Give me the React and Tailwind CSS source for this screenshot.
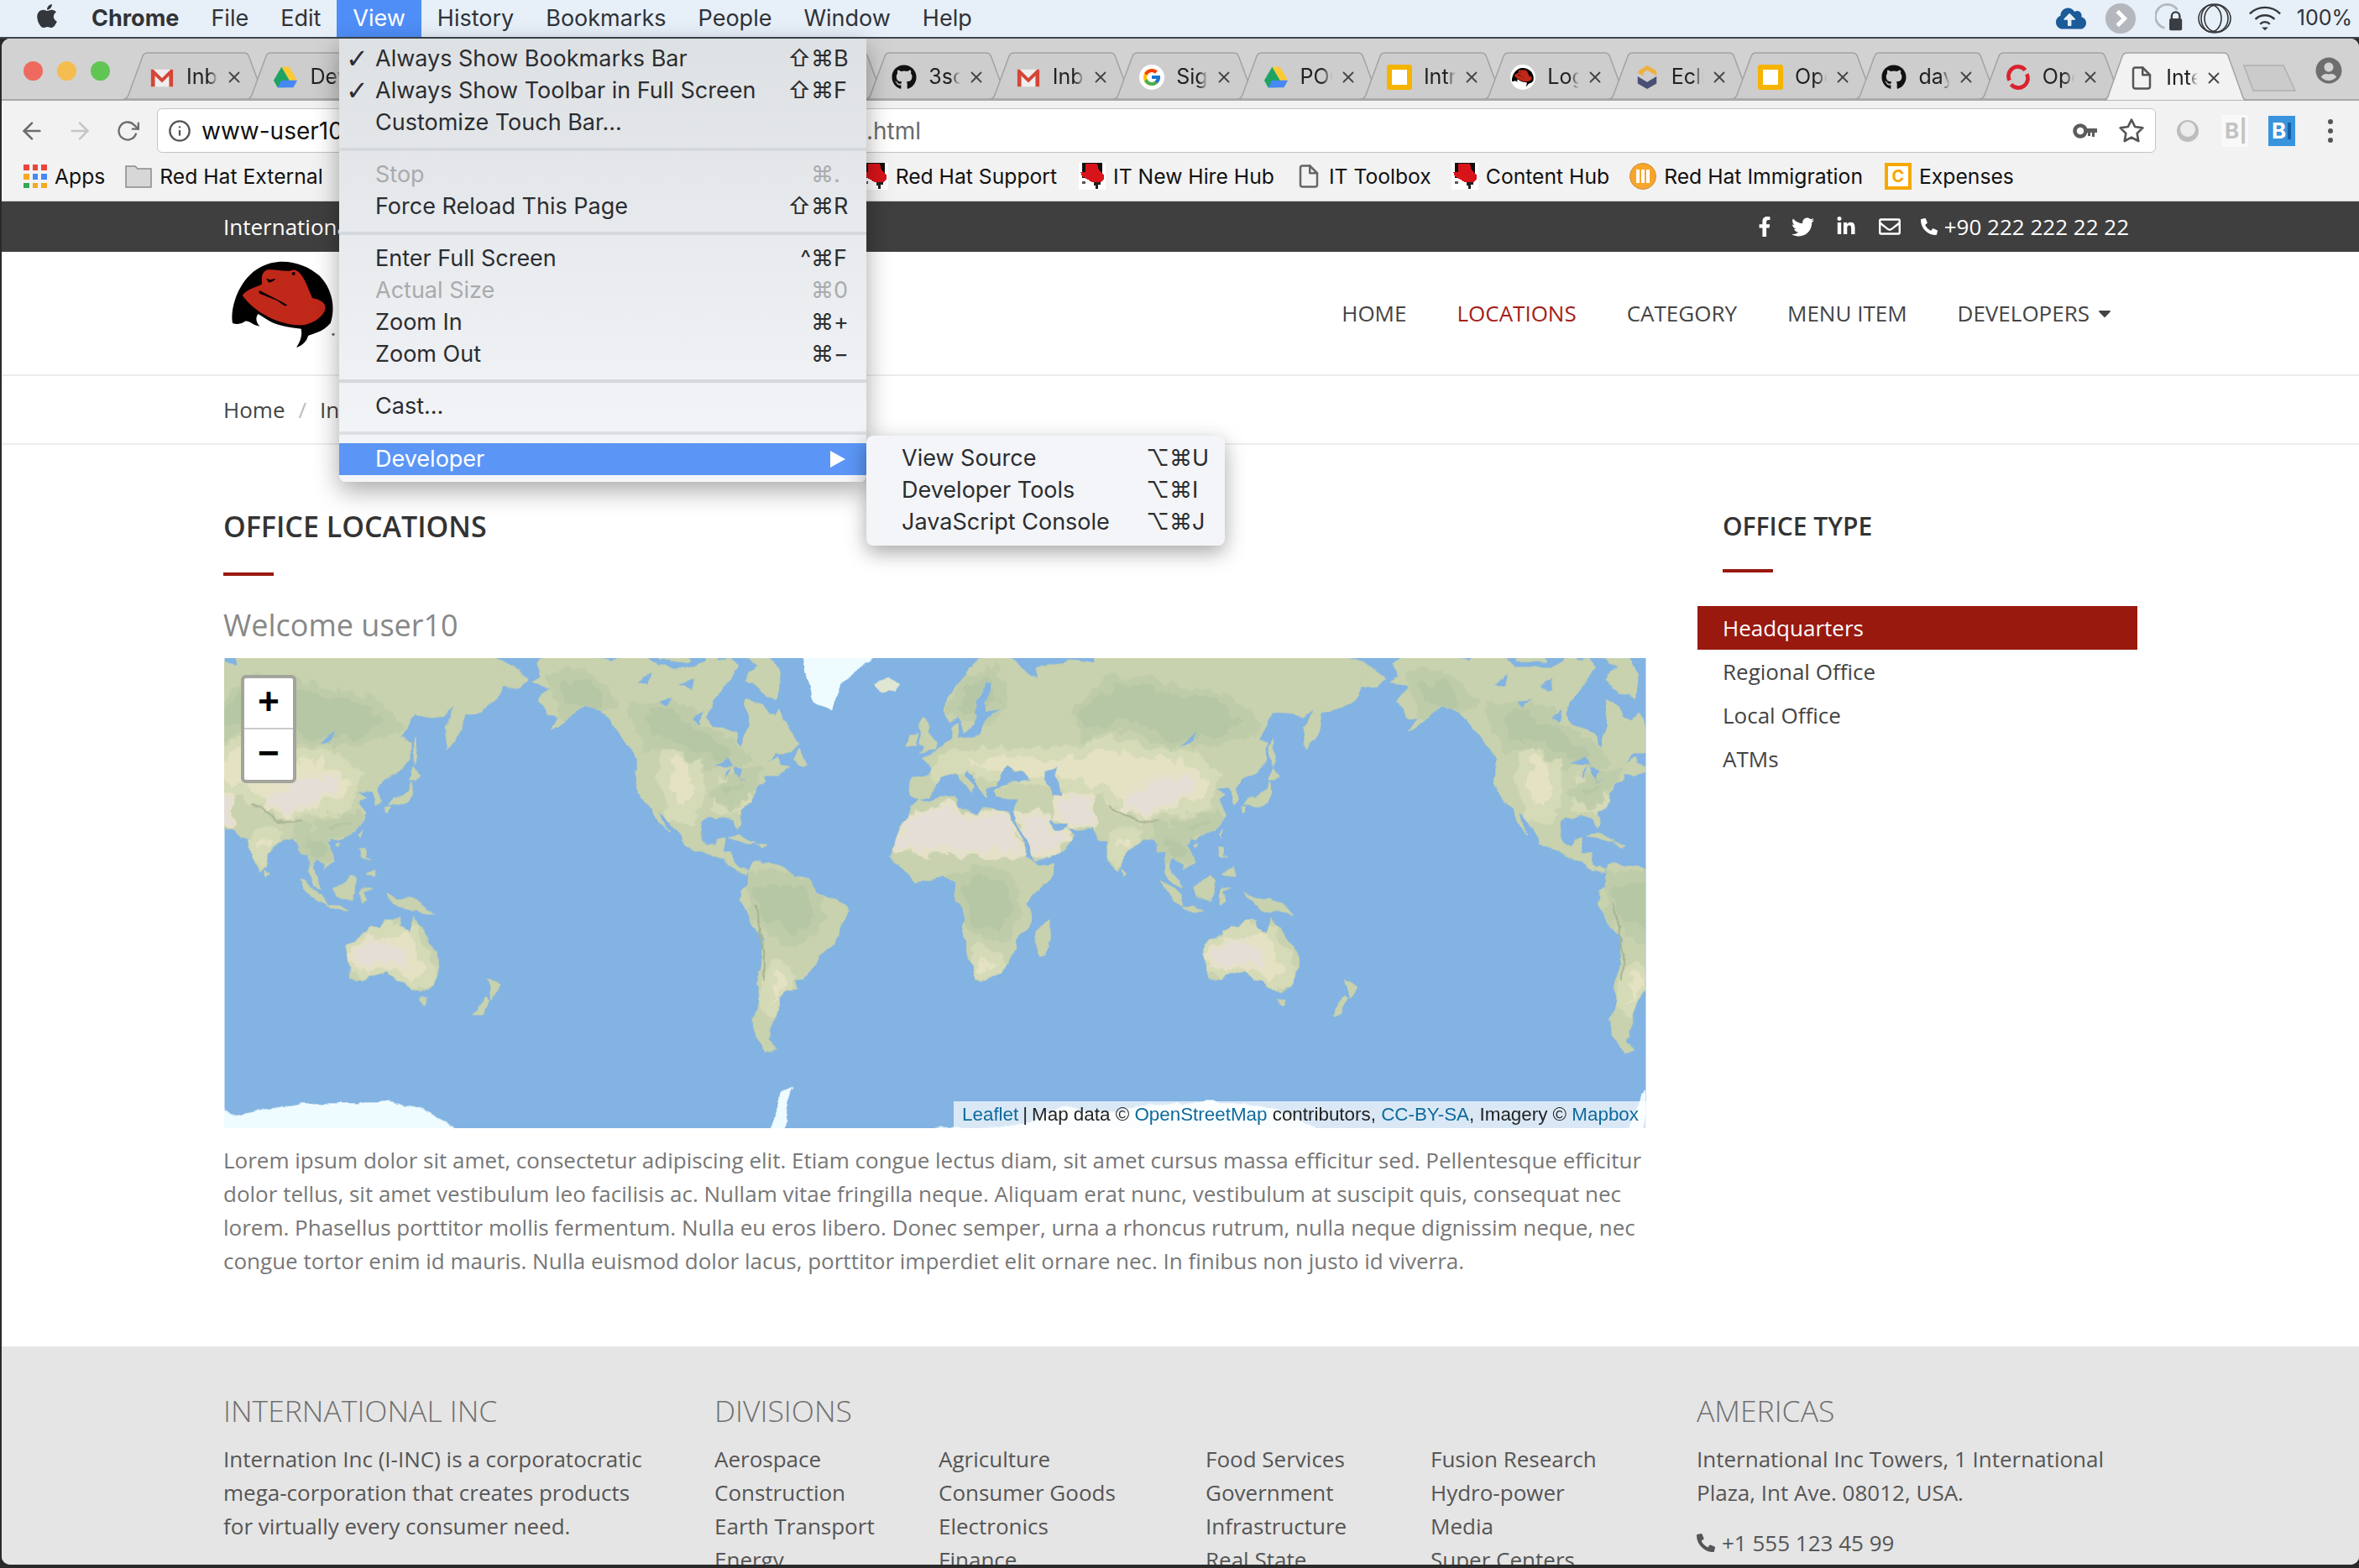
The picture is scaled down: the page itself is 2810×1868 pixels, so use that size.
import { FaApple, FaCloudUploadAlt, FaFacebookF, FaTwitter, FaLinkedinIn, FaRegEnvelope, FaPhoneAlt, FaGithub, FaCaretDown, FaUserCircle } from "react-icons/fa"
import { FcGoogle } from "react-icons/fc"
import { FiArrowLeft, FiArrowRight, FiRotateCw, FiInfo, FiStar, FiFile, FiX } from "react-icons/fi"

// --- map data: rough coastlines as [lon, lat], projected to web mercator below ---
const LAND = [
  // north america
  [[-168,65.6],[-164,66.5],[-166,68.5],[-162,70],[-156,71.3],[-148,70.5],[-141,69.7],[-135,69],[-128,70],[-120,69.5],[-115,68],[-108,68],[-100,68],[-95,69],[-94,72],[-90,69],[-85,69.5],[-82,68],[-87,65],[-93,62],[-94.5,59],[-92,57],[-87,56],[-82,55],[-82,52.5],[-79.5,51.5],[-79,55],[-77,57],[-78,60],[-78,62.5],[-72,61.5],[-70,59],[-66,58.5],[-64,60],[-61,56],[-56,52.5],[-60,50],[-66,50],[-70,47],[-65,49],[-64.5,47],[-61,46],[-65,43.5],[-70,43.5],[-70,41.5],[-74,40.5],[-75.5,38],[-76,35],[-81,31.5],[-80,27],[-80.5,25.2],[-82,27],[-83,29],[-85,29.7],[-89,30],[-91,29],[-94,29.5],[-97,28],[-97.7,24],[-97.5,21],[-95,18.5],[-91.5,18.5],[-90.5,21],[-87,21.5],[-88,16],[-84,15.8],[-83.5,11],[-81,9],[-79.5,9.5],[-77.3,8.5],[-78,7.5],[-80,7.5],[-83,8.3],[-85.5,10],[-87.5,13],[-92,14.5],[-95,16],[-100,17],[-105,19.5],[-105.5,22],[-109,26],[-112.5,30],[-114.5,31.5],[-112,26],[-110,23],[-112,25],[-115,28],[-117,32.5],[-120.5,34.5],[-122.5,37.5],[-124.3,40.5],[-124,46],[-123,49],[-128,51.5],[-131,55],[-135,58],[-140,60],[-146,61],[-151,60],[-154,58],[-160,55.5],[-157,58.5],[-162,59],[-165,62],[-161,64.5]],
  [[-80,73],[-72,71.5],[-64,67],[-65,62.5],[-72,64],[-78,66],[-73,68],[-80,70]],
  [[-117,73],[-105,73],[-102,69],[-115,69]],
  [[-59,48],[-56,51.5],[-53,47],[-56,47]],
  [[-85,22],[-80,23],[-74,20.2],[-78,20]],
  [[-74,19.8],[-69,19],[-71,18]],
  // south america
  [[-77,8.5],[-75,11],[-72,12],[-71,11],[-68,11.5],[-64,10.5],[-60,8.5],[-57,6],[-52,4.5],[-50,1],[-48,-1],[-44,-2.5],[-40,-3],[-37,-5],[-35,-7.5],[-37,-11],[-39,-15],[-39.5,-19],[-41,-22],[-45,-23.5],[-48.5,-26],[-49,-29],[-52,-33],[-55,-35],[-58,-34.5],[-57,-38],[-62,-39],[-65,-41],[-65,-45],[-68,-50],[-68.5,-53],[-65,-55],[-70,-55.5],[-74,-52],[-75.5,-47],[-73,-42],[-73.5,-37],[-71.5,-30],[-70,-20],[-71,-17.5],[-76,-14],[-79,-8],[-81,-5],[-80,-2.5],[-80.5,0],[-78.5,2],[-77.5,4],[-77.3,7]],
  // africa
  [[-6,35.8],[-2,35.2],[3,36.8],[10,37.2],[10.5,34],[15,32.5],[19,30.5],[20.5,32.7],[25,31.7],[30,31],[32.5,31],[32.5,29.8],[34,27],[37,21.5],[37.5,18.5],[39,15.5],[43,12],[44,10.5],[51,11.8],[50,8],[46,2.5],[41,-2],[39,-6],[40.5,-11],[40.5,-15],[35,-20],[35.5,-24],[32.5,-26],[32,-29],[28,-33],[25,-34],[20,-34.8],[18.3,-34],[15,-27],[14.3,-22],[12,-17],[13.5,-11],[12,-5],[9,-1],[9.5,3.5],[7,4.5],[4,6.3],[-2,5],[-4,5.2],[-8,4.5],[-13,8.5],[-15,11],[-17,14.7],[-16,20],[-13,27.5],[-10,30],[-9,33]],
  // eurasia
  [[-9,37],[-9.5,39],[-9,43],[-2,43.5],[-1,46],[-4.5,48.5],[2,51],[4,52],[8,54],[8,57],[10.5,57.5],[11,54],[14,54],[19,54.5],[21,57],[24,58.5],[29,60],[23,60],[21.5,62],[25,65.5],[22,65.5],[18,62.5],[17,60],[18,59],[16,56],[13,55.5],[11,59],[7,58],[5,60],[5.5,62],[12,66],[15,68],[20,70],[25,71],[31,70],[41,67],[44,66],[44,68],[54,68.5],[60,69],[68,68.5],[67,72],[73,72],[80,73],[90,75],[105,77.5],[113,74],[130,71],[140,72.5],[160,70],[170,70],[180,69],[180,65],[177,62.5],[170,60],[163,59.5],[162,56],[157,51],[155.5,57],[160,61],[155,59],[143,59.5],[137,54],[141,53],[140,48],[135,44],[130,42.5],[127.5,39.5],[129.5,36],[126.5,34.5],[126,37],[125,39.5],[121,39],[118,39],[122,37],[119,35],[122,31],[121,28],[118,24.5],[114,22.3],[110,21],[108,21.5],[106,19],[109,14],[109,11.5],[105,8.8],[105,10],[100.5,13.5],[99.5,10],[103,4],[104,1.4],[101,3],[98.5,8],[98,15],[94.5,16],[94,19],[91.5,22.5],[88,21.7],[86,20],[80.5,15.5],[80,10.5],[77.5,8],[75,12],[73,19],[72.5,21],[70,21],[68.5,23.5],[66.5,25.3],[61,25],[57,25.5],[56.5,27],[51,28],[48.5,30],[48,29],[50,26.5],[51.5,24.5],[54,24],[56.5,26],[59.5,22.5],[55,17],[45,13],[43,12.8],[39,21],[35,28],[34.5,31.5],[36,36],[32,36],[28,36.7],[26.5,39.5],[29,41],[35,42],[41.5,41.5],[39,44],[37,45],[33.5,44.5],[30.5,46],[28,43],[26,40.7],[23,40.5],[23,37],[20,39.5],[19,42],[14,45],[12.5,44],[18,40],[16,38],[12.5,41.5],[9,44.5],[3.5,43.2],[0,39.5],[-2,36.8],[-5.5,36]],
  [[-180,69],[-170,66],[-173,64.5],[-180,65]],
  // islands
  [[-5.5,50],[1,51.2],[1.5,52.8],[-1.5,55],[-2,57.5],[-4,58.6],[-6,57],[-4.5,54.5],[-5,52],[-3,51.4]],
  [[-10,52],[-6,52.2],[-6,55],[-8.5,55]],
  [[49.5,-12],[50.5,-16],[47.5,-25],[45,-25.5],[43.5,-22],[44.5,-16.5]],
  [[80,9.5],[82,7.5],[80.5,6]],
  [[131,34],[136,33.5],[140,35],[141.5,38],[141,41.5],[139.7,39],[136.5,37],[133,35.5]],
  [[140,42],[143,42],[145.5,43.5],[142,45.5]],
  [[130,33.5],[132,33],[131,31],[130,31.5]],
  [[142,46],[143.5,49],[143,54],[142,52]],
  [[120,23],[121.5,25],[121,22]],
  [[109,19],[111,20],[110,18.3]],
  [[120,18],[122,18],[122,14],[124,13],[120.5,14]],
  [[122,7],[126,9.5],[126,6.5]],
  [[95,5.5],[98,4],[104,-2],[106,-6],[102,-4.5],[98,0]],
  [[105.5,-6.5],[111,-6.5],[114.5,-7.8],[108,-7.8]],
  [[109,1],[113,3],[117,7],[119,5],[118,1],[116.5,-3.5],[111,-3]],
  [[119.5,-1],[120.5,1],[125,1.3],[121,0],[122.5,-4.5],[120.3,-5.5]],
  [[131,-1],[135,-3],[141,-2.7],[146,-5.5],[150.5,-10.5],[144,-7.8],[141,-9],[138,-8],[133,-4]],
  [[114,-22],[122,-18],[125,-14.5],[129,-15],[131,-12],[136,-12],[135.5,-15],[140,-17.5],[142,-11],[145.5,-15],[149,-21],[153,-25.5],[153,-30],[150,-37],[146,-39],[141,-38],[138,-35],[135,-34.5],[131,-31.5],[124,-33],[118,-35],[115,-34],[115,-30],[113.5,-25]],
  [[145,-41],[148,-41],[147,-43.5],[146,-43.5]],
  [[172.7,-34.5],[178.5,-37.5],[175,-41.5],[174.5,-38.5]],
  [[172.5,-40.7],[174,-41.7],[170.5,-46],[167,-46],[170,-43]],
]
const ICE = [
  [[-73,78.5],[-60,82],[-30,83.5],[-18,80],[-22,72],[-26,69],[-38,65.5],[-43,60],[-50,62],[-53,67],[-55,72],[-68,76]],
  [[-180,-78],[-160,-78],[-150,-76],[-130,-74],[-110,-73],[-100,-73],[-85,-73],[-75,-72],[-68,-70],[-63,-64.5],[-58,-63.5],[-60,-66],[-62,-70],[-60,-74],[-45,-78],[-30,-77],[-20,-73],[0,-70],[20,-70],[40,-69],[55,-66.5],[70,-68],[80,-67],[95,-66],[110,-66],[130,-66],[145,-67],[160,-70],[170,-71.5],[180,-78],[180,-85],[-180,-85]],
]
const ICELAND = [[-24,65.5],[-19,66.2],[-14,65.5],[-16,64],[-21,63.5]]
const DESERT = [
  [[-13,27],[-7,31],[5,33],[10,33],[15,31],[25,30],[30,30],[33,28],[36,21],[37,16],[32,16],[20,16],[5,17],[-5,16],[-16,17],[-16,21]],
  [[36,30],[44,32],[48,30],[51,25],[56,24],[58,21],[52,17],[45,15],[42,17],[38,24]],
  [[50,36],[60,38],[66,37],[68,28],[60,26],[52,29]],
  [[80,36],[90,43],[104,43],[112,45],[108,37],[100,34],[90,31],[81,31]],
  [[116,-25],[122,-20],[130,-19],[135,-22],[139,-24],[138,-31],[130,-29.5],[123,-31],[117,-30]],
]
const PALE = [
  [[0,45],[10,49],[30,50],[50,50],[75,52],[90,50],[110,48],[118,43],[116,36],[110,33],[100,33],[88,30],[80,33],[70,38],[60,40],[48,42],[38,42],[25,44],[12,46],[2,44]],
  [[-112,50],[-105,50],[-98,46],[-98,38],[-102,30],[-108,30],[-113,40]],
  [[-88,41],[-78,41],[-81,33],[-90,33]],
  [[114,-23],[122,-18.5],[130,-15.5],[136,-15],[143,-18],[147,-25],[150,-35],[141,-37],[135,-33.5],[120,-33.5],[115,-30]],
  [[74,20],[80,24],[86,24],[84,20],[78,13],[75,15]],
  [[-65,-30],[-58,-34],[-62,-39],[-66,-45],[-70,-45],[-69,-33]],
  [[18,-25],[26,-27],[30,-31],[22,-33],[18,-31]],
]
const FOREST = [
  [[-78,2],[-72,6],[-60,6],[-52,2],[-48,-3],[-46,-10],[-52,-17],[-60,-20],[-66,-17],[-75,-10]],
  [[9,3],[18,8],[30,6],[35,0],[35,-10],[30,-17],[18,-17],[13,-8],[10,-2]],
  [[60,60],[75,66],[100,65],[125,62],[135,56],[118,53],[100,53],[80,57],[65,55]],
  [[-125,60],[-110,62],[-100,58],[-85,52],[-78,48],[-92,47],[-105,51],[-120,53]],
  [[-160,66],[-145,67],[-135,62],[-140,60],[-155,60]],
  [[8,60],[15,66],[25,68],[29,62],[22,58]],
  [[95,25],[105,22],[108,14],[100,12],[96,17]],
  [[103,27],[118,30],[118,25],[108,22]],
  [[-85,34],[-78,41],[-74,43],[-82,44],[-90,38]],
]
const LAKES = [
  [[47,45],[53,46.5],[51,44],[53,40],[54,37],[50,37.5],[49,40],[47,43]],
  [[-92,46.8],[-86,48.5],[-84.5,46.5],[-88,46.5]],
  [[-87.5,41.7],[-85.5,45.5],[-87,45]],
  [[-84,46],[-80,45],[-81.5,43],[-83.5,44]],
  [[-83,42],[-79,43],[-76,44],[-78,43.3],[-80,42.5]],
  [[-124,65],[-118,67],[-119,65]],
  [[-115,62],[-109,62.8],[-112,61]],
  [[-100,58],[-96,60],[-97,57]],
  [[-106,65],[-100,66],[-101,64]],
  [[104,52],[110,55.5],[109,53]],
]
const RIDGES = [
  [[74,34],[80,31],[86,27.8],[95,28]],
  [[-75,-5],[-72,-15],[-70,-25],[-70.5,-35]],
]

function project([lon, lat]) {
  const x = ((lon + 180) / 360) * 1024
  const y = ((1 - Math.log(Math.tan(Math.PI / 4 + (lat * Math.PI) / 360)) / Math.PI) / 2) * 1024
  return `${x.toFixed(1)} ${y.toFixed(1)}`
}
const toPath = (pts, closed = true) => "M" + pts.map(project).join("L") + (closed ? "Z" : "")
const group = (list) => list.map((p) => toPath(p)).join("")

function WorldMap() {
  return (
    <svg viewBox="0 0 1696 561" className="block h-full w-full blur-[0.6px]">
      <defs>
        {/* turbulence breaks up the straight polygon edges into something coast-like */}
        <filter id="coast" x="0" y="0" width="100%" height="100%" filterUnits="userSpaceOnUse" primitiveUnits="userSpaceOnUse">
          <feTurbulence type="fractalNoise" baseFrequency="0.035" numOctaves="4" seed="3" />
          <feDisplacementMap in="SourceGraphic" scale="11" xChannelSelector="R" yChannelSelector="G" />
        </filter>
        <filter id="relief" x="-2%" y="-2%" width="104%" height="104%">
          <feTurbulence type="fractalNoise" baseFrequency="0.05" numOctaves="4" seed="8" />
          <feDisplacementMap in="SourceGraphic" scale="24" xChannelSelector="G" yChannelSelector="R" />
        </filter>
        <clipPath id="land-clip">
          <path d={group(LAND)} />
        </clipPath>
        <g id="world" strokeLinejoin="round">
          <path d={group(LAND)} fill="#c8d2ae" stroke="#c8d2ae" strokeWidth="1" />
          <g clipPath="url(#land-clip)">
            <g filter="url(#relief)">
              <path d={group(PALE)} fill="#e4e2c2" stroke="#d5dab7" strokeWidth="14" />
              <path d={group(FOREST)} fill="#b6c7a5" stroke="#bfccaa" strokeWidth="12" />
              <path d={group(DESERT)} fill="#e4ded7" stroke="#e5e1c9" strokeWidth="7" />
            </g>
          </g>
          <path d={group(ICE)} fill="#effcff" />
          <path d={toPath(ICELAND)} fill="#dfe6d2" />
          <path d={group(LAKES)} fill="#82b3e2" />
          {RIDGES.map((r, i) => (
            <path key={i} d={toPath(r, false)} fill="none" stroke="#a7b493" strokeWidth="2" />
          ))}
        </g>
      </defs>
      <rect width="1696" height="561" fill="#82b3e2" />
      <g filter="url(#coast)">
        <use href="#world" x="-691" y="-234" />
        <use href="#world" x="333" y="-234" />
        <use href="#world" x="1357" y="-234" />
      </g>
    </svg>
  )
}

// --- small drawings ---
function ShadowMan({ className }) {
  return (
    <svg viewBox="0 0 420 375" className={className}>
      <path d="M30 255C20 190 60 90 130 55C200 15 290 40 340 85C385 130 400 200 380 255C350 290 320 290 300 300C295 320 280 335 258 342C272 320 280 300 275 275C230 270 180 262 150 240L122 222C110 235 115 255 128 266C100 262 90 245 75 248C60 258 45 260 30 255Z" fill="#000" />
      <path d="M65 155C85 130 125 125 135 115C135 95 130 80 150 65C185 60 215 75 245 65C265 60 285 90 300 130L315 165C340 170 362 180 362 200C360 230 310 265 265 262C200 260 110 220 65 155Z" fill="#c0281a" />
      <path d="M125 138C150 150 190 170 225 190C220 200 205 185 190 175C165 165 140 155 125 148Z" fill="#000" />
      <path d="M150 95L165 100L185 95L175 105L160 110Z" fill="#000" />
      <circle cx="248" cy="78" r="6" fill="#000" />
      <circle cx="390" cy="295" r="5" fill="#666" />
    </svg>
  )
}

// the low-res favicon version: mostly red, black top corner, white bottom
function RedHatFav() {
  return (
    <svg viewBox="0 0 32 32" className="size-[32px]" shapeRendering="crispEdges">
      <rect width="32" height="32" fill="#fff" />
      <path d="M4 0h24v22H4z" fill="#111" />
      <path d="M0 18h32v14H0z" fill="#fff" />
      <path d="M8 1h14l2 8 6 5v6l-4 3H16L4 16l-2-5h6z" fill="#d8141a" />
      <path d="M18 23h8v3h-3v5h-3v-4h-2z" fill="#222" />
      <path d="M4 22h4v3H4z" fill="#555" />
    </svg>
  )
}

function Gmail() {
  return (
    <svg viewBox="0 0 32 32" className="size-[30px]">
      <path d="M2 6h28v22H2z" fill="#eee" />
      <path d="M2 28V6h3l11 11L27 6h3v22h-5V14l-9 9-9-9v14z" fill="#d44638" />
    </svg>
  )
}

function Drive() {
  return (
    <svg viewBox="0 0 32 32" className="size-[30px]">
      <path d="M11 3h10l10 17H21z" fill="#fcc934" />
      <path d="M11 3l10 17-5 9H6l-5-9z" fill="#1ea362" />
      <path d="M11 20h20l-5 9H6z" fill="#4688f4" />
    </svg>
  )
}

function Slides() {
  return (
    <span className="flex size-[30px] items-center justify-center rounded-[3px] bg-[#f5b400]">
      <span className="size-[18px] bg-white" />
    </span>
  )
}

function Che() {
  return (
    <svg viewBox="0 0 32 32" className="size-[30px]">
      <path d="M16 1l12 7v6l-12-7-5 3v4l-6-3V8z" fill="#f0b03a" />
      <path d="M4 15l12 7 12-7v9l-12 7-12-7z" fill="#4a4f75" />
    </svg>
  )
}

function OpenShiftFav() {
  return (
    <svg viewBox="0 0 32 32" className="size-[30px]" fill="none" stroke="#d9232e" strokeWidth="5">
      <path d="M5 20A12 12 0 0 1 25 7" />
      <path d="M27 12A12 12 0 0 1 7 25" />
    </svg>
  )
}

const TABS = [
  { icon: <Gmail />, title: "Inbox" },
  { icon: <Drive />, title: "Dev" },
  // these four sit behind the open menu
  { icon: <Drive /> },
  { icon: <Drive /> },
  { icon: <Drive /> },
  { icon: <Drive /> },
  { icon: <FaGithub className="size-[30px] text-[#111]" />, title: "3scale" },
  { icon: <Gmail />, title: "Inbox" },
  { icon: <span className="flex size-[30px] items-center justify-center rounded-full bg-white"><FcGoogle className="size-[24px]" /></span>, title: "Sign" },
  { icon: <Drive />, title: "POC" },
  { icon: <Slides />, title: "Intro" },
  { icon: <ShadowMan className="size-[30px] rounded-full bg-white" />, title: "Log" },
  { icon: <Che />, title: "Eclipse" },
  { icon: <Slides />, title: "Open" },
  { icon: <FaGithub className="size-[30px] text-[#111]" />, title: "day" },
  { icon: <OpenShiftFav />, title: "Open" },
  { icon: <FiFile className="size-[30px] text-[#555]" />, title: "International", active: true },
]

function Tab({ icon, title, active, first }) {
  return (
    <div className={`relative h-[56px] w-[172.4px] shrink-0 ${first ? "" : "-ml-[25px]"} ${active ? "z-10 -mb-[2px] h-[58px]" : ""}`}>
      <svg viewBox="0 0 172 58" className="absolute inset-0 h-full w-full" preserveAspectRatio="none">
        <path d="M0 58C4 58 6 54 7 50L23 5C24 2 26 1 29 1H143C146 1 148 2 149 5L165 50C166 54 168 58 172 58Z" fill={active ? "#f2f2f2" : "#cdcdcd"} stroke="#a3a3a3" strokeWidth="1.5" />
      </svg>
      <div className="relative flex h-full items-center pl-[31px] pt-[4px]">
        <span className="flex size-[30px] shrink-0 items-center justify-center">{icon}</span>
        <span className="ml-[14px] w-[38px] overflow-hidden whitespace-nowrap text-[25px] text-[#222] [mask-image:linear-gradient(to_right,black_70%,transparent)]">{title}</span>
        <FiX className="ml-[8px] size-[22px] shrink-0 text-[#444]" />
      </div>
    </div>
  )
}

function Bookmark({ icon, label, className = "" }) {
  return (
    <div className={`flex items-center gap-[9px] ${className}`}>
      {icon}
      <span className="whitespace-nowrap text-[24.7px] text-[#111]">{label}</span>
    </div>
  )
}

function AppsGrid() {
  const colors = ["#e8453c", "#e8453c", "#e8453c", "#f4a91f", "#4688f4", "#4688f4", "#34a853", "#f4a91f", "#f4a91f"]
  return (
    <div className="grid size-[28px] grid-cols-3 gap-[4px]">
      {colors.map((c, i) => (
        <span key={i} style={{ backgroundColor: c }} />
      ))}
    </div>
  )
}

function MenuRow({ check, label, mods, keyName, disabled, arrow, highlighted, pad = "pl-[43px]" }) {
  const color = highlighted ? "text-white" : disabled ? "text-[#a9abad]" : "text-[#2b2d30]"
  return (
    <div className={`relative flex h-[38px] items-center pr-[19px] text-[27px] ${pad} ${color} ${highlighted ? "bg-[#5b96f6]" : ""}`}>
      {check && <span className="absolute left-[8px] font-['DejaVu_Sans',sans-serif] text-[32px] font-bold">✓</span>}
      <span className="whitespace-nowrap">{label}</span>
      {mods !== undefined && (
        <span className="ml-auto flex font-['Inter','DejaVu_Sans',sans-serif]">
          <span className="text-right">{mods}</span>
          <span className="w-[20px] text-left">{keyName}</span>
        </span>
      )}
      {arrow && (
        <svg viewBox="0 0 20 20" className="ml-auto mr-[5px] size-[20px]">
          <path d="M1 0l18 10L1 20z" fill="#fff" />
        </svg>
      )}
    </div>
  )
}

const MenuSep = () => <div className="mb-[9px] mt-[11px] h-[4px] bg-[#d5d8dc]" />

function ViewMenu() {
  return (
    <div className="absolute left-[404px] top-[46px] z-30 h-[528px] w-[628px] rounded-b-[8px] bg-gradient-to-b from-[#dee1e4] to-[#f4f6f9] pt-[5px] font-['Inter','DejaVu_Sans',sans-serif] shadow-[0_10px_30px_rgba(0,0,0,0.35)]">
      <MenuRow check label="Always Show Bookmarks Bar" mods="⇧⌘" keyName="B" />
      <MenuRow check label="Always Show Toolbar in Full Screen" mods="⇧⌘" keyName="F" />
      <MenuRow label="Customize Touch Bar..." />
      <MenuSep />
      <MenuRow disabled label="Stop" mods="⌘" keyName="." />
      <MenuRow label="Force Reload This Page" mods="⇧⌘" keyName="R" />
      <MenuSep />
      <MenuRow label="Enter Full Screen" mods="^⌘" keyName="F" />
      <MenuRow disabled label="Actual Size" mods="⌘" keyName="0" />
      <MenuRow label="Zoom In" mods="⌘" keyName="+" />
      <MenuRow label="Zoom Out" mods="⌘" keyName="−" />
      <MenuSep />
      <MenuRow label="Cast..." />
      <div className="mb-[10px] mt-[11px] h-[4px] bg-[#dde0e3]" />
      <MenuRow highlighted arrow label="Developer" />
    </div>
  )
}

function DeveloperMenu() {
  return (
    <div className="absolute left-[1032px] top-[519px] z-30 h-[131px] w-[427px] rounded-[8px] bg-[#f3f5f8] pt-[8px] font-['Inter','DejaVu_Sans',sans-serif] shadow-[0_8px_24px_rgba(0,0,0,0.35)]">
      <MenuRow pad="pl-[42px]" label="View Source" mods="⌥⌘" keyName="U" />
      <MenuRow pad="pl-[42px]" label="Developer Tools" mods="⌥⌘" keyName="I" />
      <MenuRow pad="pl-[42px]" label="JavaScript Console" mods="⌥⌘" keyName="J" />
    </div>
  )
}

function MenuBar() {
  const items = ["File", "Edit", "View", "History", "Bookmarks", "People", "Window", "Help"]
  return (
    <div className="flex h-[46px] shrink-0 items-stretch border-b-2 border-[#3c4650] bg-[#e7eff8] font-['Inter',sans-serif] text-[27px] text-[#2f3338]">
      <FaApple className="ml-[40px] mt-[3px] size-[32px] text-[#33363a]" />
      <div className="ml-[18px] flex items-center px-[19px] font-bold">Chrome</div>
      {items.map((m) => (
        <div key={m} className={`flex items-center px-[19px] ${m === "View" ? "bg-[#4f8ef7] text-white" : ""}`}>{m}</div>
      ))}
      <div className="ml-auto flex items-center pr-[8px]">
        <FaCloudUploadAlt className="size-[36px] text-[#1a5b98]" />
        <svg viewBox="0 0 40 40" className="ml-[22px] size-[38px]">
          <circle cx="20" cy="20" r="19" fill="#b4b8be" />
          <path d="M16 11l9 9-9 9" fill="none" stroke="#fff" strokeWidth="5" />
        </svg>
        <svg viewBox="0 0 38 36" className="ml-[22px] size-[36px]">
          <path d="M28 7A15 15 0 1 0 12 30" fill="none" stroke="#b4b8be" strokeWidth="3" />
          <rect x="18" y="18" width="16" height="15" rx="2" fill="#3a3d44" />
          <path d="M21 18v-3a5 5 0 0 1 10 0v3" fill="none" stroke="#3a3d44" strokeWidth="2.5" />
        </svg>
        <svg viewBox="0 0 40 36" className="ml-[15px] h-[36px] w-[40px]" fill="none" stroke="#33363a" strokeWidth="1.6">
          <ellipse cx="20" cy="18" rx="19" ry="17" />
          <ellipse cx="16" cy="18" rx="12" ry="16" />
          <ellipse cx="22" cy="18" rx="14" ry="16" />
        </svg>
        <svg viewBox="0 0 42 32" className="ml-[20px] h-[32px] w-[40px]" fill="none" stroke="#33363a" strokeWidth="2.5">
          <path d="M2 10a27 27 0 0 1 38 0" />
          <path d="M9 17a17 17 0 0 1 24 0" />
          <path d="M15 23a8 8 0 0 1 12 0" />
          <path d="M17 27h8l-4 4z" fill="#33363a" stroke="none" />
        </svg>
        <span className="ml-[18px] text-[25px]">100%</span>
      </div>
    </div>
  )
}

function Toolbar() {
  return (
    <div className="flex h-[62px] shrink-0 items-end bg-[#f2f2f2] pl-[7px]">
      <div className="flex h-[53px] items-center text-[#6d6d6d]">
        <span className="flex w-[57px] justify-center"><FiArrowLeft className="size-[32px]" /></span>
        <span className="flex w-[57px] justify-center"><FiArrowRight className="size-[32px] text-[#c6c6c6]" /></span>
        <span className="flex w-[57px] justify-center"><FiRotateCw className="size-[28px]" /></span>
      </div>
      <div className="ml-[7px] flex h-[53px] w-[2381px] items-center rounded-[6px] border border-[#c4c4c4] bg-white pl-[12px] pr-[12px] text-[28px]">
        <FiInfo className="size-[28px] text-[#555]" />
        <span className="ml-[12px] w-[792px] text-[#111]">www-user10</span>
        <span className="text-[#6b6b6b]">.html</span>
        <svg viewBox="0 0 30 24" className="ml-auto h-[24px] w-[30px]">
          <circle cx="9" cy="12" r="6.5" fill="none" stroke="#5c5c5c" strokeWidth="4.5" />
          <path d="M15 9h14v5h-3v5h-3v-5h-2v4h-3v-4h-3z" fill="#5c5c5c" />
        </svg>
        <FiStar className="ml-[24px] size-[32px] text-[#555]" />
      </div>
      <div className="ml-[10px] flex h-[53px] items-center">
        <span className="flex w-[56px] justify-center">
          <svg viewBox="0 0 28 28" className="size-[28px]">
            <circle cx="14" cy="14" r="13" fill="#bdbdbd" />
            <circle cx="14" cy="12" r="9" fill="#ececec" />
          </svg>
        </span>
        <span className="flex w-[56px] justify-center">
          <span className="flex h-[38px] w-[32px] items-center overflow-hidden bg-[#f9f9f9] pl-[4px] text-[26px] font-bold text-[#c3c3c3]">B|</span>
        </span>
        <span className="flex w-[56px] justify-center">
          <span className="flex h-[36px] w-[32px] items-center overflow-hidden bg-[#3a94dd] pl-[4px] text-[26px] font-bold text-white">B<span className="ml-[2px] h-[20px] w-[4px] bg-[#1261a8]" /></span>
        </span>
        <span className="flex w-[60px] flex-col items-center gap-[5px]">
          <span className="size-[6px] rounded-full bg-[#555]" />
          <span className="size-[6px] rounded-full bg-[#555]" />
          <span className="size-[6px] rounded-full bg-[#555]" />
        </span>
      </div>
    </div>
  )
}

const NAV = ["HOME", "LOCATIONS", "CATEGORY", "MENU ITEM"]
const OFFICE_TYPES = ["Regional Office", "Local Office", "ATMs"]
const DIVISIONS = [
  { w: "w-[267px]", items: ["Aerospace", "Construction", "Earth Transport", "Energy"] },
  { w: "w-[318px]", items: ["Agriculture", "Consumer Goods", "Electronics", "Finance"] },
  { w: "w-[268px]", items: ["Food Services", "Government", "Infrastructure", "Real State"] },
  { w: "w-[317px]", items: ["Fusion Research", "Hydro-power", "Media", "Super Centers"] },
]

export default function App() {
  return (
    <div className="relative flex h-[1868px] w-[2810px] flex-col overflow-hidden bg-[#2a2a2a] font-['Open_Sans',sans-serif]">
      <MenuBar />
      <ViewMenu />
      <DeveloperMenu />

      {/* browser window */}
      <div className="ml-[2px] flex h-[1818px] flex-col overflow-hidden rounded-[10px] bg-white">
        <div className="h-[194px] shrink-0 font-['Inter',sans-serif]">
          <div className="relative flex h-[74px] items-end border-b-2 border-[#a8a8a8] bg-[#d2d2d2] pl-[145px]">
            <div className="absolute left-[26px] top-[27px] flex gap-[17px]">
              <span className="size-[23px] rounded-full bg-[#ee6a5f]" />
              <span className="size-[23px] rounded-full bg-[#f5bd4f]" />
              <span className="size-[23px] rounded-full bg-[#61c554]" />
            </div>
            {TABS.map((t, i) => (
              <Tab key={i} first={i === 0} {...t} />
            ))}
            <svg viewBox="0 0 66 34" className="mb-[8px] ml-[-8px] h-[34px] w-[66px]">
              <path d="M3 2H50L64 32H14Z" fill="#cbcbcb" stroke="#b0b0b0" strokeWidth="1.5" />
            </svg>
            <FaUserCircle className="absolute right-[20px] top-[22px] size-[32px] text-[#6e6e6e]" />
          </div>
          <Toolbar />
          <div className="flex h-[58px] items-center border-b border-[#d4d4d4] bg-[#f2f2f2] pl-[26px]">
            <Bookmark icon={<AppsGrid />} label="Apps" />
            <Bookmark
              className="ml-[24px]"
              icon={
                <svg viewBox="0 0 32 28" className="h-[28px] w-[32px]">
                  <path d="M1 27V2h11l3 3h16v22z" fill="#d7d7d7" stroke="#8a8a8a" strokeWidth="1.5" />
                </svg>
              }
              label="Red Hat External"
            />
            <Bookmark className="ml-[641px]" icon={<RedHatFav />} label="Red Hat Support" />
            <Bookmark className="ml-[26px]" icon={<RedHatFav />} label="IT New Hire Hub" />
            <Bookmark className="ml-[26px]" icon={<FiFile className="size-[30px] text-[#666]" />} label="IT Toolbox" />
            <Bookmark className="ml-[24px]" icon={<RedHatFav />} label="Content Hub" />
            <Bookmark
              className="ml-[24px]"
              icon={
                <span className="flex size-[32px] items-center justify-center gap-[2px] rounded-full border border-[#c98f3d] bg-[#f9a52b]">
                  <span className="h-[16px] w-[4px] bg-white" />
                  <span className="h-[16px] w-[4px] bg-white" />
                  <span className="h-[16px] w-[4px] bg-white" />
                </span>
              }
              label="Red Hat Immigration"
            />
            <Bookmark
              className="ml-[26px]"
              icon={<span className="flex size-[32px] items-center justify-center border-[4px] border-[#f5a800] bg-white text-[20px] font-bold text-[#f5a800]">C</span>}
              label="Expenses"
            />
          </div>
        </div>

        {/* page */}
        <div className="flex h-[60px] shrink-0 items-center justify-between bg-[#3f3f3f] pl-[264px] pr-[274px] text-[26px] text-white">
          <span>International Inc</span>
          <div className="flex items-center">
            <FaFacebookF className="size-[24px]" />
            <FaTwitter className="ml-[20px] size-[27px]" />
            <FaLinkedinIn className="ml-[26px] size-[24px]" />
            <FaRegEnvelope className="ml-[27px] size-[26px]" />
            <span className="ml-[24px] flex items-center gap-[8px]"><FaPhoneAlt className="size-[20px]" />+90 222 222 22 22</span>
          </div>
        </div>

        <div className="flex h-[148px] shrink-0 border-b-2 border-[#ededed] pl-[265px] pr-[291px]">
          <ShadowMan className="h-[125px] w-[140px]" />
          <nav className="ml-auto flex items-center gap-[60px] text-[26px] text-[#444]">
            {NAV.map((n) => (
              <span key={n} className={n === "LOCATIONS" ? "text-[#a3211a]" : ""}>{n}</span>
            ))}
            <span className="flex items-center gap-[6px]">DEVELOPERS <FaCaretDown className="size-[24px]" /></span>
          </nav>
        </div>

        <div className="flex h-[82px] shrink-0 items-center border-b-2 border-[#ededed] pl-[264px] text-[26px] text-[#444]">
          Home<span className="mx-[16px] text-[#bbb]">/</span>International
        </div>

        <div className="flex h-[1074px] shrink-0 gap-[60px] pl-[264px]">
          <div className="w-[1696px]">
            <h2 className="mt-[77px] text-[34px] font-semibold leading-[40px] text-[#333]">OFFICE LOCATIONS</h2>
            <div className="mt-[35px] h-[4px] w-[60px] bg-[#99190f]" />
            <h3 className="mt-[37px] text-[36px] leading-[44px] text-[#888]">Welcome user10</h3>
            <div className="relative mt-[17px] h-[560px] overflow-hidden">
              <WorldMap />
              <div className="absolute left-[21px] top-[20px] w-[66px] overflow-hidden rounded-[6px] border-[4px] border-[#a3a49c] bg-white font-['Liberation_Mono',monospace] text-[44px] font-bold text-black">
                <div className="flex h-[61px] items-center justify-center border-b-2 border-[#ccc] pt-[3px]">+</div>
                <div className="flex h-[60px] items-center justify-center pt-[2px]">−</div>
              </div>
              <div className="absolute bottom-0 right-0 flex h-[32px] items-center bg-white/70 px-[10px] font-['Liberation_Sans',sans-serif] text-[22.4px] text-[#222]">
                <span className="text-[#0f6a9c]">Leaflet</span>
                <span className="mx-[5px]">|</span>
                Map data ©&nbsp;<span className="text-[#0f6a9c]">OpenStreetMap</span>&nbsp;contributors,&nbsp;<span className="text-[#0f6a9c]">CC-BY-SA</span>, Imagery ©&nbsp;<span className="text-[#0f6a9c]">Mapbox</span>
              </div>
            </div>
            <p className="mt-[18px] text-[26px] leading-[40px] text-[#777]">
              Lorem ipsum dolor sit amet, consectetur adipiscing elit. Etiam congue lectus diam, sit amet cursus massa efficitur sed. Pellentesque efficitur dolor tellus, sit amet vestibulum leo facilisis ac. Nullam vitae fringilla neque. Aliquam erat nunc, vestibulum at suscipit quis, consequat nec lorem. Phasellus porttitor mollis fermentum. Nulla eu eros libero. Donec semper, urna a rhoncus rutrum, nulla neque dignissim neque, nec congue tortor enim id mauris. Nulla euismod dolor lacus, porttitor imperdiet elit ornare nec. In finibus non justo id viverra.
            </p>
          </div>

          <aside className="w-[524px]">
            <h2 className="mt-[77px] pl-[30px] text-[30px] font-semibold leading-[40px] text-[#333]">OFFICE TYPE</h2>
            <div className="ml-[30px] mt-[31px] h-[4px] w-[60px] bg-[#99190f]" />
            <ul className="mt-[40px] text-[26px] text-[#444]">
              <li className="flex h-[52px] items-center bg-[#99190f] pl-[30px] text-white">Headquarters</li>
              {OFFICE_TYPES.map((t) => (
                <li key={t} className="flex h-[52px] items-center pl-[30px]">{t}</li>
              ))}
            </ul>
          </aside>
        </div>

        <footer className="flex flex-1 bg-[#e5e5e5] pl-[264px] pt-[54px] text-[26px] leading-[40px] text-[#555]">
          <div className="w-[585px]">
            <h4 className="text-[35.5px] font-light leading-[44px] text-[#707070]">INTERNATIONAL INC</h4>
            <p className="mt-[16px] w-[510px]">Internation Inc (I-INC) is a corporatocratic mega-corporation that creates products for virtually every consumer need.</p>
          </div>
          <div className="w-[1170px]">
            <h4 className="text-[35.5px] font-light leading-[44px] text-[#707070]">DIVISIONS</h4>
            <div className="mt-[16px] flex">
              {DIVISIONS.map((c) => (
                <ul key={c.w} className={c.w}>
                  {c.items.map((it) => (
                    <li key={it}>{it}</li>
                  ))}
                </ul>
              ))}
            </div>
          </div>
          <div className="w-[520px]">
            <h4 className="text-[35.5px] font-light leading-[44px] text-[#707070]">AMERICAS</h4>
            <p className="mt-[16px]">International Inc Towers, 1 International Plaza, Int Ave. 08012, USA.</p>
            <p className="mt-[20px] flex items-center gap-[8px]"><FaPhoneAlt className="size-[22px]" />+1 555 123 45 99</p>
          </div>
        </footer>
      </div>
    </div>
  )
}
